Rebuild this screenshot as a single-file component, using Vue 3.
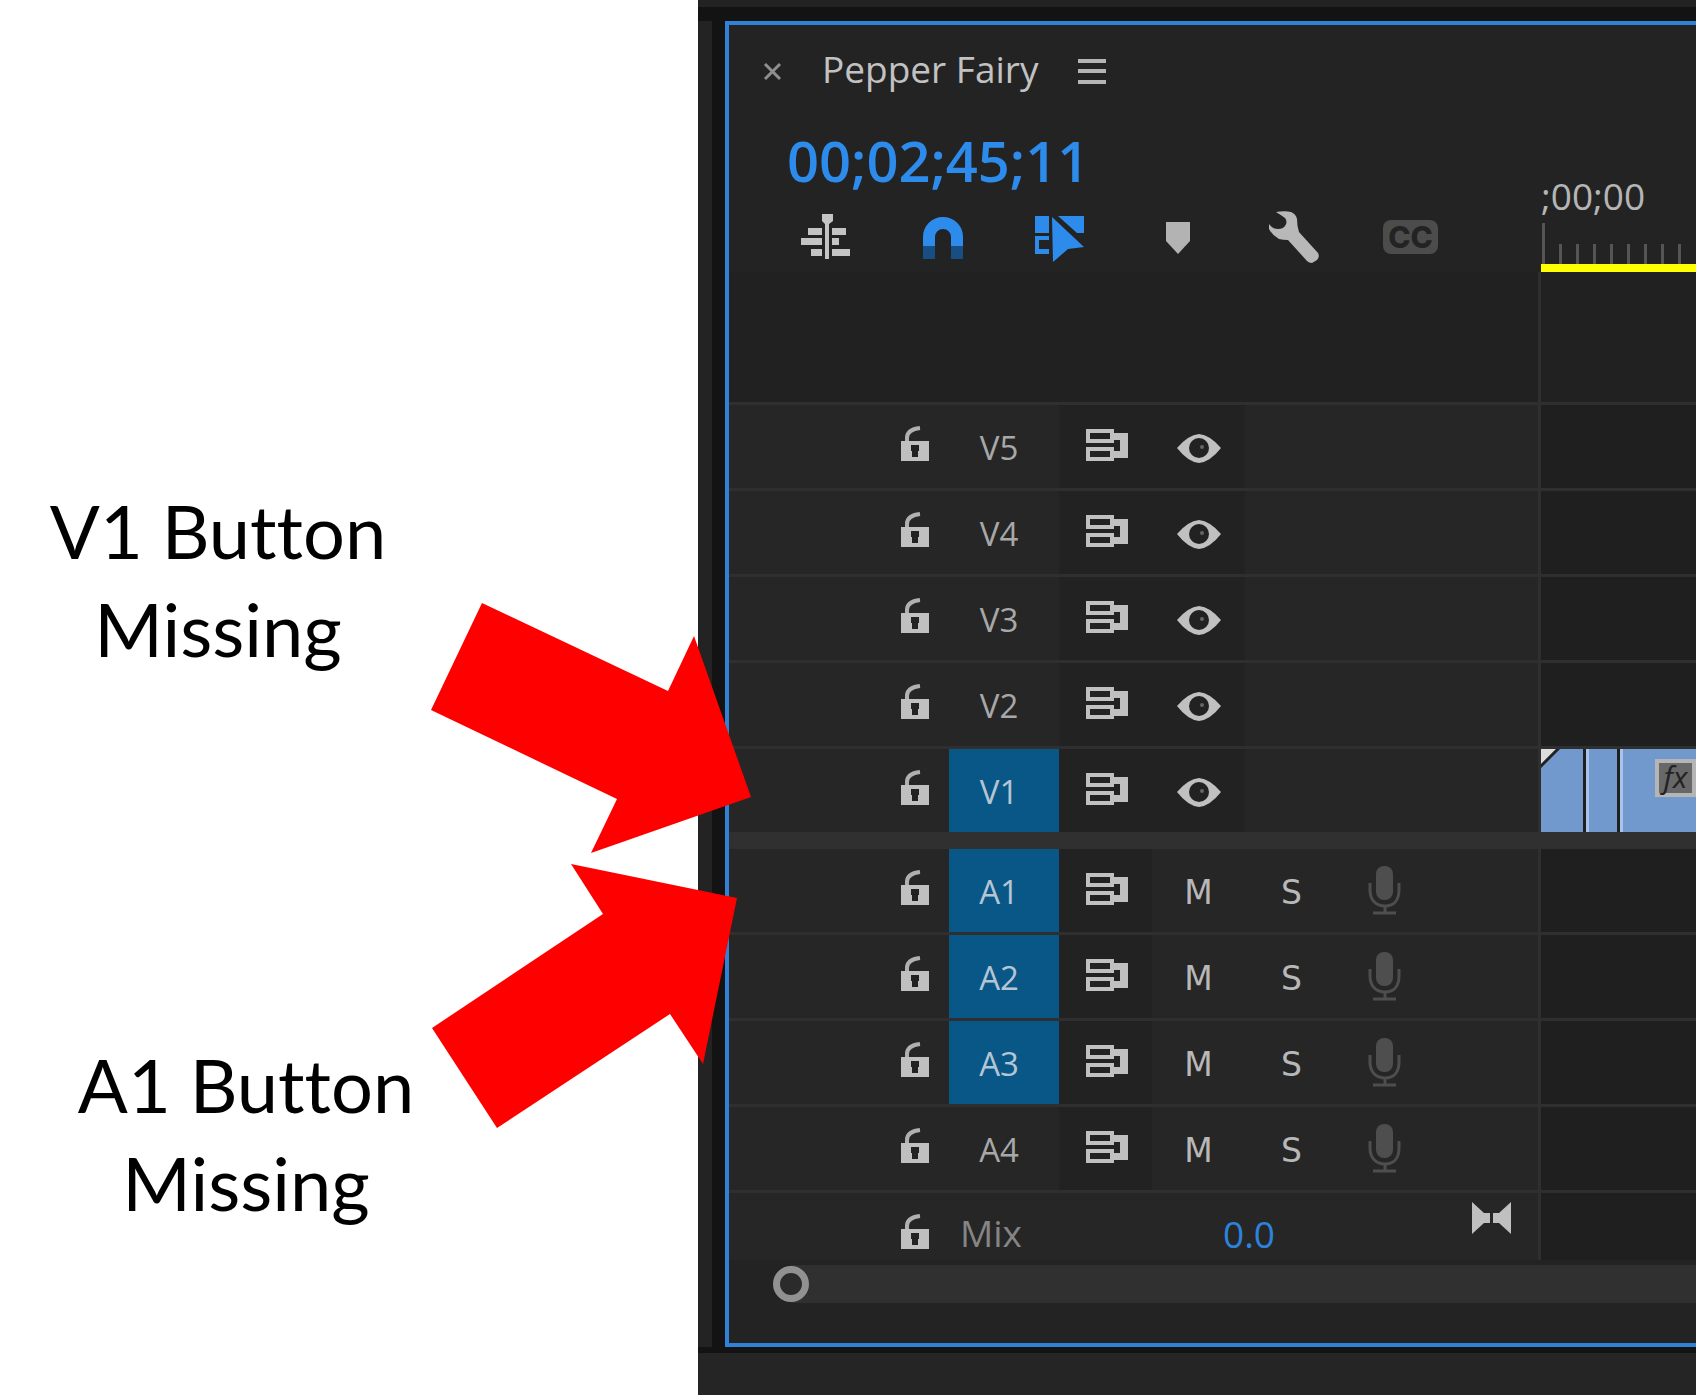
<script setup>
import { ref } from "vue";

const videoTracks = ref([
  { name: "V5", targeted: false },
  { name: "V4", targeted: false },
  { name: "V3", targeted: false },
  { name: "V2", targeted: false },
  { name: "V1", targeted: true },
]);

const audioTracks = ref([
  { name: "A1", targeted: true },
  { name: "A2", targeted: true },
  { name: "A3", targeted: true },
  { name: "A4", targeted: false },
]);

const scroll = ref(0);
</script>

<template>
  <main>
    <!-- icons shared by the track rows -->
    <svg class="symbols" width="0" height="0">
      <symbol id="lock" viewBox="0 0 29 44">
        <path d="M6 17V13C6 8 10 4 19 3" fill="none" stroke="#b0b0b0" stroke-width="4" />
        <path d="M0 16H28V36H0Z" fill="#c0c0c0" />
        <path d="M10 20H18V26H17V32H11V26H10Z" fill="#222" />
      </symbol>
      <symbol id="sync" viewBox="0 0 43 40">
        <path d="M2 4H26V14H2ZM2 22H26V32H2Z" fill="none" stroke="#c0c0c0" stroke-width="4" />
        <path d="M28 6H42V31H28V24H34V13H28Z" fill="#c0c0c0" />
      </symbol>
    </svg>

    <section class="notes">
      <p class="note">V1 Button<br />Missing</p>
      <p class="note note-audio">A1 Button<br />Missing</p>
      <svg class="arrows" width="322" height="526" viewBox="430 603 322 526">
        <path d="M482 603 668 691 694 636 751 797 591 853 617 799 431 710Z" />
        <path d="M571 864 737 898 703 1064 670 1014 497 1128 432 1028 603 914Z" />
      </svg>
    </section>

    <section class="app">
      <div class="strip-top"></div>
      <div class="dock">
        <div class="side-panel"></div>
        <div class="panel">
          <header class="panel-head">
            <div class="controls">
              <div class="tab">
                <button class="close" aria-label="Close">
                  <svg width="20" height="20" viewBox="0 0 20 20">
                    <path d="M3 2 18 17M18 2 3 17" stroke="#8f8f8f" stroke-width="3" />
                  </svg>
                </button>
                <span class="title">Pepper Fairy</span>
                <button aria-label="Panel menu">
                  <svg width="28" height="26" viewBox="0 0 28 26">
                    <path d="M0 2H28M0 12H28M0 23H28" stroke="#b5b5b5" stroke-width="4" />
                  </svg>
                </button>
              </div>
              <div class="timecode">00;02;45;11</div>
              <div class="toolbar">
                <button aria-label="Nest sequences">
                  <svg width="50" height="52" viewBox="0 -2 50 52">
                    <path
                      fill="#c4c4c4"
                      d="M21 1H32V8L28 11V46H24V11L21 8ZM7 15H21V22H7ZM31 15H45V22H31ZM0 25H21V32H0ZM31 25H38V32H31ZM10 36H21V43H10ZM31 36H49V43H31Z"
                    />
                  </svg>
                </button>
                <button aria-label="Snap">
                  <svg width="42" height="52" viewBox="0 -6 42 52">
                    <path d="M7 28V42M35 28V42" stroke="#174f85" stroke-width="12" />
                    <path
                      d="M7 29V20A14 14 0 0 1 35 20V29"
                      fill="none"
                      stroke="#2d8ceb"
                      stroke-width="12"
                    />
                  </svg>
                </button>
                <button aria-label="Linked selection">
                  <svg width="50" height="54" viewBox="0 -5 50 54">
                    <path
                      fill="#2d8ceb"
                      d="M0 1H14V18H0ZM0 21H14V25H4V34H14V39H0ZM23 1H49V18H42ZM17 2 49 32 33 34 18 47Z"
                    />
                  </svg>
                </button>
                <button aria-label="Add marker">
                  <svg width="26" height="34" viewBox="-2 -2 26 34">
                    <path d="M0 0H24V19L12 32 0 19Z" fill="#b3b3b3" />
                  </svg>
                </button>
                <button aria-label="Settings">
                  <svg width="50" height="54" viewBox="0 -1 50 54">
                    <path
                      fill="#b8b8b8"
                      d="M7 1C12 0 18 0 22 1Q27 3 28 8Q28 15 30 21L49 42Q51 46 48 49L43 52Q40 52 38 50L19 29Q14 29 10 28Q3 24 0 18V13Q4 18 9 18Q14 18 16 15Q19 11 16 7Q12 4 7 1Z"
                    />
                  </svg>
                </button>
                <button aria-label="Captions"><span class="cc">CC</span></button>
              </div>
            </div>
            <div class="ruler">
              <span class="ruler-time">;00;00</span>
              <div class="ticks"><i v-for="n in 9" :key="n"></i></div>
            </div>
          </header>

          <div class="row empty">
            <div class="track-head"></div>
            <div class="lane"></div>
          </div>

          <div v-for="track in videoTracks" :key="track.name" class="row">
            <div class="track-head">
              <button class="lock" aria-label="Lock">
                <svg width="29" height="44"><use href="#lock" /></svg>
              </button>
              <button
                class="target"
                :class="{ on: track.targeted }"
                @click="track.targeted = !track.targeted"
              >
                {{ track.name }}
              </button>
              <button class="cell sync" aria-label="Sync lock">
                <svg width="43" height="40"><use href="#sync" /></svg>
              </button>
              <button class="cell" aria-label="Track output">
                <svg width="46" height="32" viewBox="0 0 46 32">
                  <path d="M1 17Q12 4 23 3Q34 4 45 17Q34 31 23 32Q12 31 1 17Z" fill="#c0c0c0" />
                  <circle cx="23" cy="17" r="10" fill="#222" />
                  <circle cx="26" cy="16" r="2" fill="#666" />
                </svg>
              </button>
            </div>
            <div class="lane">
              <template v-if="track.name === 'V1'">
                <div class="clip first"></div>
                <div class="clip second"></div>
                <div class="clip last"><span class="fx">fx</span></div>
              </template>
            </div>
          </div>

          <div class="divider"></div>

          <div v-for="track in audioTracks" :key="track.name" class="row">
            <div class="track-head">
              <button class="lock" aria-label="Lock">
                <svg width="29" height="44"><use href="#lock" /></svg>
              </button>
              <button
                class="target"
                :class="{ on: track.targeted }"
                @click="track.targeted = !track.targeted"
              >
                {{ track.name }}
              </button>
              <button class="cell sync" aria-label="Sync lock">
                <svg width="43" height="40"><use href="#sync" /></svg>
              </button>
              <button class="letter">M</button>
              <button class="letter">S</button>
              <button aria-label="Voice-over record">
                <svg width="34" height="50" viewBox="0 0 34 50">
                  <rect x="8" y="0" width="17" height="34" rx="8" fill="#4e4e4e" />
                  <path
                    d="M2 17V24C2 34 8 40 17 40S31 34 31 24V17M17 40V46M5 47H28"
                    fill="none"
                    stroke="#4e4e4e"
                    stroke-width="3"
                  />
                </svg>
              </button>
            </div>
            <div class="lane"></div>
          </div>

          <div class="row mix">
            <div class="track-head">
              <button class="lock" aria-label="Lock">
                <svg width="29" height="44"><use href="#lock" /></svg>
              </button>
              <span class="mix-name">Mix</span>
              <button class="level">0.0</button>
              <button class="bowtie" aria-label="Show keyframes">
                <svg width="40" height="34" viewBox="0 0 40 34">
                  <path d="M0 1 12 12H18V22H12L0 33ZM39 1 27 12H21V22H27L39 33Z" fill="#c0c0c0" />
                </svg>
              </button>
            </div>
            <div class="lane"></div>
          </div>

          <input
            v-model="scroll"
            class="scrollbar"
            type="range"
            min="0"
            max="100"
            aria-label="Timeline scroll"
          />
        </div>
      </div>
      <div class="strip-bottom"></div>
    </section>
  </main>
</template>

<style>
body {
  margin: 0;
  overflow-x: hidden;
}
</style>

<style scoped>
main {
  display: grid;
  grid-template-columns: 698fr 998fr;
  min-height: 100vh;
  background: #fff;
  font-family: "Open Sans", "Noto Sans", sans-serif;
}

button {
  display: flex;
  align-items: center;
  justify-content: center;
  padding: 0;
  border: none;
  background: none;
  color: inherit;
  font: inherit;
}

svg {
  display: block;
}
.symbols {
  position: absolute;
}

/* annotations */
.notes {
  position: relative;
  padding: 482px 0 0 48px;
}
.note {
  width: 340px;
  margin: 0;
  font-family: Lato, sans-serif;
  font-size: 74px;
  font-variant-ligatures: none;
  line-height: 98px;
  text-align: center;
  color: #000;
}
.note-audio {
  margin: 358px 0 0 28px;
}
.arrows {
  position: absolute;
  z-index: 1;
  top: 603px;
  right: -54px;
  fill: #f00;
}

/* window frame */
.app {
  display: flex;
  flex-direction: column;
  min-width: 0;
  background: #252525;
}
.strip-top {
  height: 7px;
  background: #232323;
}
.dock {
  display: flex;
  gap: 13px;
  padding: 14px 0 6px;
  background: #131313;
}
.side-panel {
  width: 14px;
  background: #232323;
}
.strip-bottom {
  flex: 1;
}
.panel {
  flex: 1;
  min-width: 0;
  padding-bottom: 40px;
  border: 4px solid #2f82d8;
  border-right: none;
  background: #232323;
  overflow: hidden;
}

.panel-head,
.row {
  display: grid;
  grid-template-columns: 812px 1fr;
}

/* tab, timecode, tools */
.tab {
  display: flex;
  align-items: center;
  height: 93px;
  padding-left: 33px;
}
.title {
  margin: 0 40px;
  padding-bottom: 6px;
  font-size: 37px;
  color: #c2c2c2;
}
.timecode {
  height: 80px;
  padding-left: 58px;
  font-size: 56px;
  font-weight: 600;
  line-height: 84px;
  color: #2d8ceb;
}
.toolbar {
  display: flex;
  height: 74px;
  padding-left: 38px;
}
.toolbar button {
  width: 117px;
  height: 78px;
}
.cc {
  width: 55px;
  border-radius: 8px;
  background: #4c4c4c;
  font-family: Inter, sans-serif;
  font-size: 30px;
  font-weight: 800;
  line-height: 34px;
  color: #232323;
}

.ruler {
  display: flex;
  flex-direction: column;
  justify-content: flex-end;
  border-bottom: 8px solid #ff0;
  overflow: hidden;
}
.ruler-time {
  font-size: 37px;
  line-height: 54px;
  color: #b5b5b5;
}
.ticks {
  display: flex;
  align-items: flex-end;
  gap: 14px;
  height: 41px;
  padding-left: 1px;
}
.ticks i {
  flex: none;
  width: 3px;
  height: 20px;
  background: #555;
}
.ticks i:first-child {
  height: 41px;
}

/* tracks */
.row {
  height: 83px;
  border-top: 3px solid #2f2f2f;
}
.row.empty {
  height: 130px;
  border-top: none;
}
.track-head {
  display: grid;
  grid-template-columns: 220px 110px 93px 93px 93px 93px 1fr;
  border-right: 3px solid #2f2f2f;
  background: #262626;
}
.empty .track-head,
.empty .lane {
  background: #212121;
}
.lane {
  display: flex;
  min-width: 0;
  background: #1f1f1f;
  overflow: hidden;
}
.lock {
  justify-content: flex-start;
  padding-left: 172px;
}
.target {
  padding: 2px 10px 0 0;
  font-size: 33px;
  color: #a8a8a8;
}
.target.on {
  background: #085787;
  color: #b5c5d3;
}
.cell {
  background: #222;
}
.sync {
  padding-left: 4px;
}
.letter {
  padding-top: 4px;
  font-family: "DejaVu Sans", sans-serif;
  font-size: 33px;
  color: #b8b8b8;
}

.clip {
  flex: none;
  box-sizing: border-box;
  margin-right: 3px;
  border-left: 3px solid #a9c4ea;
  background: #7199cd;
}
.first {
  width: 42px;
  border-left: none;
  background: linear-gradient(135deg, #ddd 10px, #222 11px, #222 13px, #7199cd 14px);
}
.second {
  width: 31px;
}
.last {
  flex: 1;
  display: flex;
  justify-content: flex-end;
  margin-right: 0;
}
.fx {
  box-sizing: border-box;
  width: 41px;
  height: 38px;
  margin-top: 10px;
  border: 4px solid #b5b5b5;
  background: #686868;
  font-size: 30px;
  font-style: italic;
  line-height: 28px;
  text-align: center;
  color: #222;
}

.divider {
  height: 17px;
  background: #303030;
}
.divider + .row {
  border-top: none;
}

.mix {
  height: 67px;
}
.mix .track-head {
  grid-template-columns: 220px 210px 180px 1fr;
}
.mix .lock {
  padding-top: 16px;
}
.mix-name {
  padding: 14px 0 0 11px;
  font-size: 37px;
  line-height: 51px;
  color: #858585;
}
.level {
  padding-top: 14px;
  font-size: 37px;
  color: #2d82dc;
}
.bowtie {
  align-items: flex-start;
  justify-content: flex-end;
  padding: 8px 26px 0 0;
}

.scrollbar {
  appearance: none;
  display: block;
  width: calc(100% - 44px);
  height: 38px;
  margin: 5px 0 0 44px;
  background: linear-gradient(to right, transparent 18px, #303030 18px);
}
.scrollbar::-webkit-slider-thumb {
  appearance: none;
  box-sizing: border-box;
  width: 36px;
  height: 36px;
  border: 7px solid #919191;
  border-radius: 50%;
  background: #2b2b2b;
}
</style>
